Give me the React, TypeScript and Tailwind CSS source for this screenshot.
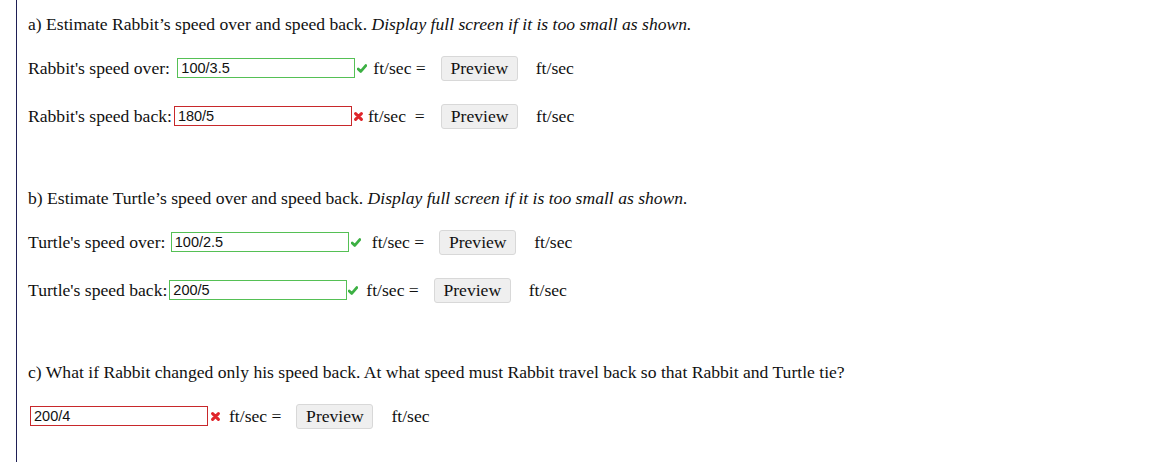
import React from "react";

const Check = () => (
  <svg width="10" height="9" viewBox="0 0 10 9" className="inline-block">
    <path d="M1.2 4.9 L3.8 7.4 L8.8 1.6" fill="none" stroke="#3cb043" strokeWidth="2.8" strokeLinecap="round" strokeLinejoin="round" />
  </svg>
);

const Cross = () => (
  <svg width="9" height="9" viewBox="0 0 9 9" className="inline-block">
    <path d="M1.6 1.6 L7.4 7.4 M7.4 1.6 L1.6 7.4" fill="none" stroke="#e0252b" strokeWidth="3" strokeLinecap="round" />
  </svg>
);

type RowProps = {
  label?: string;
  labelGap: string;
  value: string;
  ok: boolean;
  iconGap: string;
  afterIcon: string;
  eq: string;
  btnGap: string;
  mt: string;
};

function Row({ label, labelGap, value, ok, iconGap, afterIcon, eq, btnGap, mt }: RowProps) {
  return (
    <div className={`flex items-center h-[26px] ${mt} whitespace-pre`}>
      {label && <span>{label}</span>}
      <span
        className={`${labelGap} h-[20px] w-[178px] border ${ok ? "border-[#55c055]" : "border-[#c8282b]"} pl-[3px] flex items-center text-[14.5px] text-[#111] leading-none`}
        style={{ fontFamily: '"Liberation Sans", Arial, sans-serif' }}
      >
        {value}
      </span>
      <span className={`${iconGap} flex items-center`}>{ok ? <Check /> : <Cross />}</span>
      <span className={afterIcon}>{eq}</span>
      <span className={`${btnGap} h-[25px] w-[77px] flex items-center justify-center bg-[#efefef] border border-[#d8d8d8] rounded-[3px] text-[#111]`}>
        Preview
      </span>
      <span className="ml-[18px]">ft/sec</span>
    </div>
  );
}

export default function App() {
  return (
    <div
      className="w-[1156px] h-[462px] bg-white text-[17.6px] text-[#111] overflow-hidden"
      style={{ fontFamily: '"Liberation Serif", "Times New Roman", serif' }}
    >
      <div className="ml-[16px] h-full border-l border-[#1f1f55] pl-[11px] pt-[14px] flex flex-col">
        <div className="h-[20px] flex items-center whitespace-pre">
          a) Estimate Rabbit’s speed over and speed back. <i>Display full screen if it is too small as shown.</i>
        </div>
        <Row label="Rabbit's speed over: " labelGap="ml-[3px]" value="100/3.5" ok={true} iconGap="ml-[2px]" afterIcon="ml-[6px]" eq="ft/sec =" btnGap="ml-[15px]" mt="mt-[21px]" />
        <Row label="Rabbit's speed back:" labelGap="ml-[2px]" value="180/5" ok={false} iconGap="ml-[2px]" afterIcon="ml-[5px]" eq="ft/sec  = " btnGap="ml-[12px]" mt="mt-[22px]" />

        <div className="h-[20px] flex items-center whitespace-pre mt-[59px]">
          b) Estimate Turtle’s speed over and speed back. <i>Display full screen if it is too small as shown.</i>
        </div>
        <Row label="Turtle's speed over: " labelGap="ml-[1px]" value="100/2.5" ok={true} iconGap="ml-[2px]" afterIcon="ml-[11px]" eq="ft/sec =" btnGap="ml-[15px]" mt="mt-[21px]" />
        <Row label="Turtle's speed back:" labelGap="ml-[2px]" value="200/5" ok={true} iconGap="ml-[1px]" afterIcon="ml-[8px]" eq="ft/sec =" btnGap="ml-[15px]" mt="mt-[22px]" />

        <div className="h-[20px] flex items-center whitespace-pre mt-[59px]">
          c) What if Rabbit changed only his speed back. At what speed must Rabbit travel back so that Rabbit and Turtle tie?
        </div>
        <div className="pl-[2px]">
          <Row labelGap="" value="200/4" ok={false} iconGap="ml-[3px]" afterIcon="ml-[9px]" eq="ft/sec =" btnGap="ml-[15px]" mt="mt-[21px]" />
        </div>
      </div>
    </div>
  );
}
